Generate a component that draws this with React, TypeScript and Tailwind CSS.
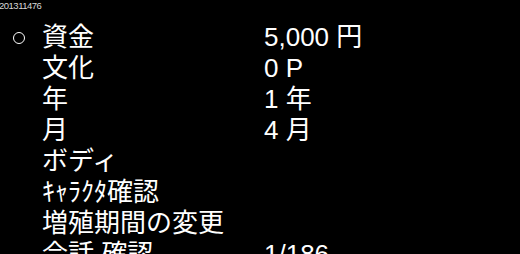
import React from 'react';

type Row = {
  label: string;
  value?: string;
  selected?: boolean;
};

const rows: Row[] = [
  { label: '資金', value: '5,000 円', selected: true },
  { label: '文化', value: '0 P' },
  { label: '年', value: '1 年' },
  { label: '月', value: '4 月' },
  { label: 'ボディ' },
  { label: 'ｷｬﾗｸﾀ確認' },
  { label: '増殖期間の変更' },
  { label: '会話 確認', value: '1/186' },
];

export default function App() {
  return (
    <div
      className="w-[520px] h-[254px] bg-black text-white overflow-hidden"
      style={{ fontFamily: '"Liberation Sans", "Noto Sans CJK JP", sans-serif' }}
    >
      <div className="h-[22px] -ml-[1px] text-[9.5px] leading-[11px] tracking-[-0.5px] text-[#d8d8d8]">
        201311476
      </div>
      <ul className="flex flex-col">
        {rows.map((row) => (
          <li key={row.label} className="flex items-center h-[31px] text-[26px] leading-[31px]">
            <span className="w-[42px] flex justify-center pr-[5px]">
              {row.selected && (
                <span className="block w-[12px] h-[12px] rounded-full border-[1.5px] border-white" />
              )}
            </span>
            <span className="w-[222px] whitespace-nowrap">{row.label}</span>
            <span className="whitespace-nowrap">{row.value}</span>
          </li>
        ))}
      </ul>
    </div>
  );
}
